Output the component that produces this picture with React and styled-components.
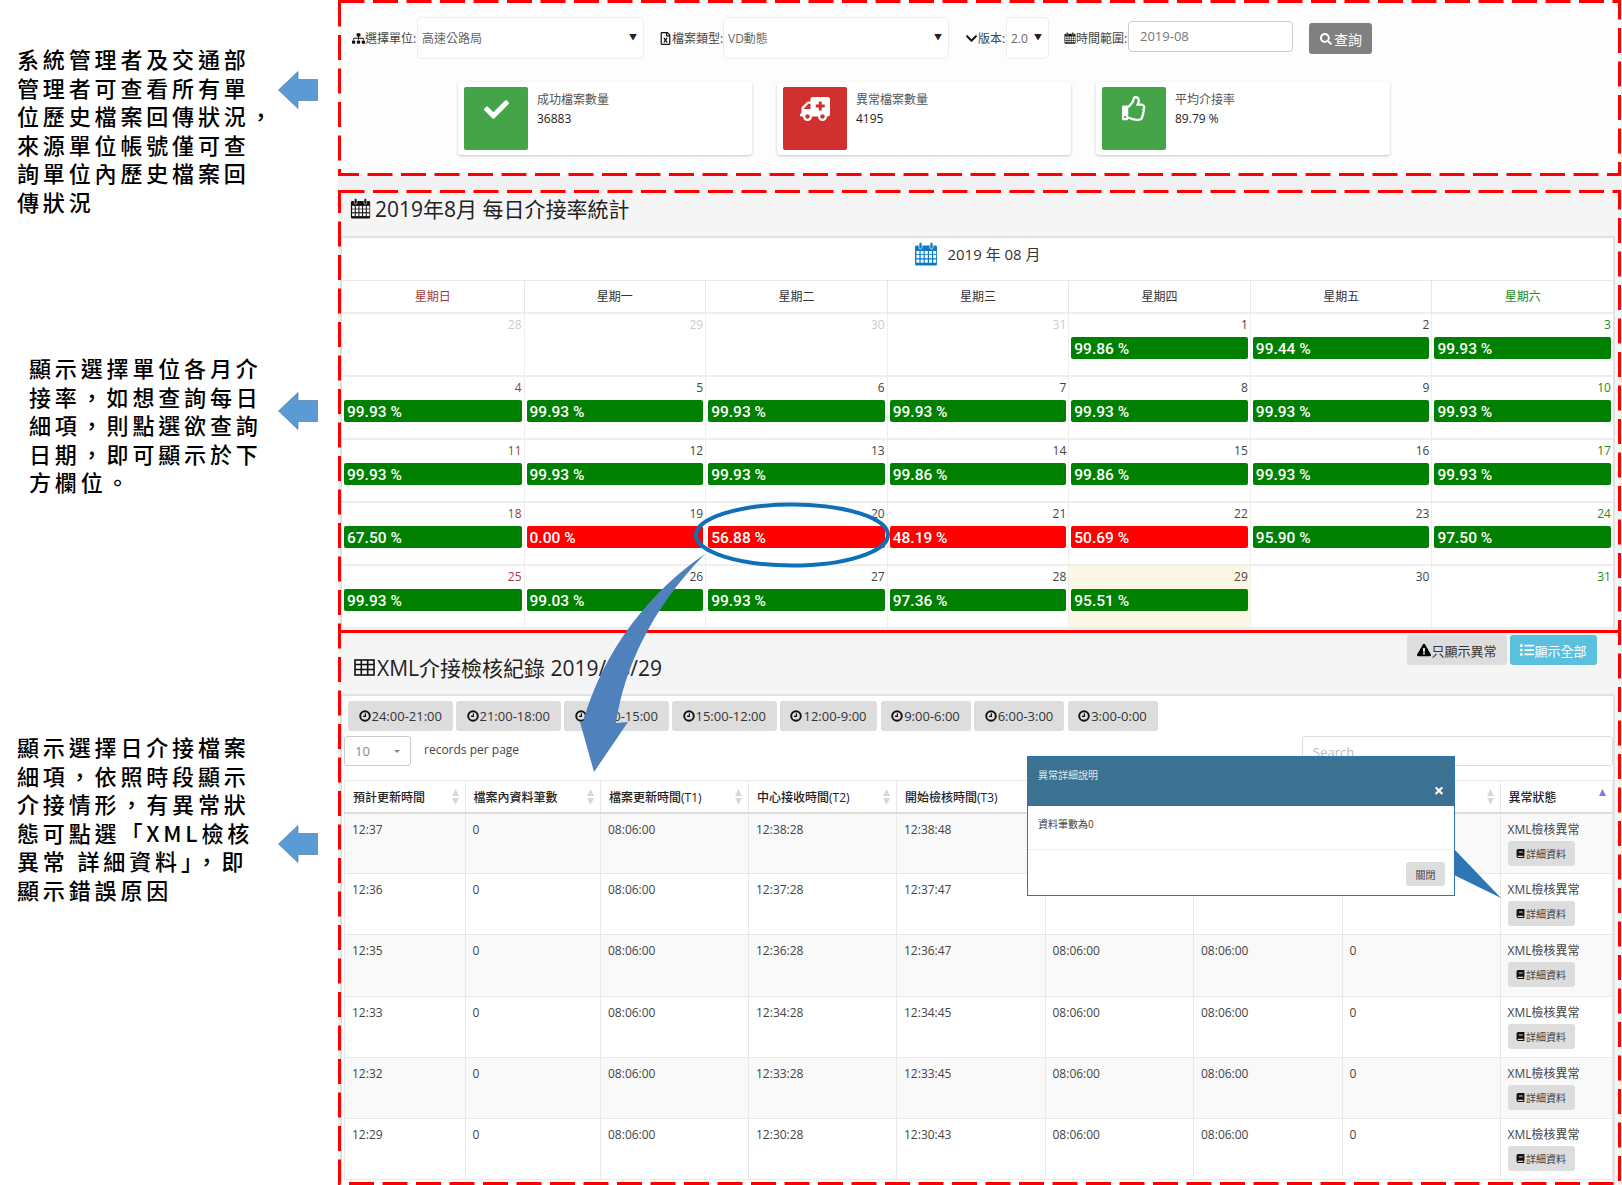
import React from "react";
import styled, { createGlobalStyle } from "styled-components";
import {
  FaAmbulance,
  FaBook,
  FaCheck,
  FaChevronDown,
  FaExclamationTriangle,
  FaList,
  FaRegFileExcel,
  FaRegThumbsUp,
  FaSearch,
  FaSitemap,
} from "react-icons/fa";

const FONT = `"Open Sans", "Noto Sans CJK TC", sans-serif`;

const GlobalStyle = createGlobalStyle`
  html, body {
    margin: 0;
    height: 1185px;
    overflow: hidden;
    background: #fff;
    font-family: ${FONT};
    color: #333;
  }
  * { box-sizing: border-box; }
`;

const Page = styled.div`
  position: relative;
  display: flex;
  width: 1622px;
  height: 1185px;
  overflow: hidden;
`;

const NotesColumn = styled.aside`
  width: 338px;
  flex: none;
`;

const Note = styled.div`
  display: flex;
  align-items: flex-start;
  height: ${(p) => p.$height}px;
  padding-top: ${(p) => p.$top}px;
  padding-left: ${(p) => p.$left}px;
`;

const NoteText = styled.p`
  margin: 0;
  width: ${(p) => 278 - p.$left}px;
  font-family: "Noto Sans CJK TC", sans-serif;
  font-size: 22px;
  font-weight: 500;
  line-height: 28.6px;
  letter-spacing: 3.85px;
  color: #000;
  white-space: pre-line;
`;

const ArrowIcon = styled.svg`
  width: 40px;
  height: 38px;
  flex: none;
  margin-top: ${(p) => p.$offset}px;
`;

const Workspace = styled.main`
  position: relative;
  width: 1284px;
  flex: none;
  background: #f1f1f3;
`;

const DashFrame = styled.svg`
  position: absolute;
  inset: 0;
  width: 100%;
  height: 100%;
  pointer-events: none;
  z-index: 3;
  fill: none;

  rect {
    x: 1.5px;
    y: 1.5px;
    width: calc(100% - 3px);
    height: calc(100% - 3px);
    stroke: #ff0000;
    stroke-width: 3;
    stroke-dasharray: 25 8.5;
  }
`;

const TopSection = styled.section`
  position: relative;
  height: 176px;
  margin: 0 1px 14px 0;
  padding-top: 17px;
  background: #fdfdfd;
`;

const Toolbar = styled.div`
  display: flex;
  align-items: center;
  height: 42px;
  padding-left: 14px;
`;

const FilterLabel = styled.span`
  display: flex;
  align-items: center;
  width: ${(p) => p.$width}px;
  margin-left: ${(p) => p.$gap || 0}px;
  font-size: 12px;
  color: #444;
  white-space: nowrap;

  svg {
    flex: none;
    font-size: 13px;
    color: #111;
  }
`;

const Dropdown = styled.div`
  display: flex;
  align-items: center;
  justify-content: space-between;
  width: ${(p) => p.$width}px;
  height: 42px;
  padding: 0 6px 0 4px;
  background: #fff;
  border: 1px solid #eee;
  border-radius: 5px;
  font-size: 12px;
  color: #666;

  &::after {
    content: "▼";
    font-size: 8px;
    color: #222;
    margin-top: -3px;
  }
`;

const DateInput = styled.div`
  width: 165px;
  height: 31px;
  margin-left: 2px;
  margin-top: -3px;
  padding: 0 11px;
  background: #fff;
  border: 1px solid #ccc;
  border-radius: 4px;
  font-size: 13px;
  line-height: 29px;
  color: #777;
`;

const SearchButton = styled.button`
  display: flex;
  align-items: center;
  gap: 2px;
  width: 63px;
  height: 31px;
  margin: 1px 0 0 16px;
  padding: 0 0 0 11px;
  background: #808080;
  border: 0;
  border-radius: 3px;
  font: 14px ${FONT};
  color: #fff;

  svg { font-size: 12px; }
`;

const StatRow = styled.div`
  display: flex;
  gap: 25px;
  margin: 23px 0 0 120px;
`;

const StatCard = styled.div`
  display: flex;
  width: 294px;
  height: 73px;
  padding: 5px 6px;
  background: #fff;
  border-radius: 3px;
  box-shadow: 0 1px 3px rgba(0, 0, 0, 0.22);
`;

const StatIcon = styled.div`
  display: flex;
  justify-content: center;
  width: 64px;
  height: 63px;
  flex: none;
  padding-top: ${(p) => p.$top || 10}px;
  background: ${(p) => p.$color};
  border-radius: 2px;
  font-size: 25px;
  color: #fff;
`;

const AmbulanceMark = styled(FaAmbulance)`
  font-size: 30px;
  transform: scaleX(-1);
`;

const StatBody = styled.div`
  padding: 3px 0 0 9px;
  font-size: 12px;
  line-height: 19px;
`;

const StatLabel = styled.div`
  color: #555;
`;

const StatValue = styled.div`
  color: #222;
`;

const LowerSection = styled.section`
  position: relative;
  height: 995px;
  margin-right: 1px;
  padding: 0 2px;
  background: #f5f5f5;
`;

const PanelHeading = styled.h3`
  display: flex;
  align-items: center;
  gap: 4px;
  height: 46px;
  margin: 0;
  padding: 0 0 10px 10px;
  font-size: 21px;
  font-weight: 400;
  color: #222;
  white-space: nowrap;
`;

const PanelBody = styled.div`
  width: 1275px;
  background: #fff;
  border: 2px solid #e2e2e2;
  border-bottom: 0;
`;

const MonthTitle = styled.div`
  display: flex;
  align-items: center;
  justify-content: center;
  gap: 9px;
  height: 42px;
  padding-bottom: 11px;
  font-size: 15px;
  color: #333;
`;

const CalendarSvg = styled.svg`
  flex: none;
  width: ${(p) => p.$width}px;
  height: ${(p) => p.$height}px;
  color: ${(p) => p.$color || "#111"};
`;

const WeekGrid = styled.div`
  display: grid;
  grid-template-columns: repeat(7, 1fr);
`;

const WeekDay = styled.div`
  height: 34px;
  border-top: 1px solid #e8e8e8;
  border-left: ${(p) => (p.$first ? "0" : "1px solid #e8e8e8")};
  border-bottom: 2px solid #eee;
  text-align: center;
  font-size: 12px;
  line-height: 31px;
  color: ${(p) => p.$color || "#333"};
`;

const DayCell = styled.div`
  height: 63px;
  padding: 2px 2px 0;
  background: ${(p) => (p.$today ? "#fcf8e3" : "transparent")};
  border-left: ${(p) => (p.$first ? "0" : "1px solid #eee")};
  border-bottom: 2px solid #eee;
`;

const DayNumber = styled.div`
  height: 17px;
  margin-bottom: 4px;
  text-align: right;
  font-size: 12px;
  line-height: 17px;
  color: ${(p) => p.$color};
`;

const RateBar = styled.div`
  height: 22px;
  padding-left: 3px;
  background: ${(p) => (p.$bad ? "#ff0000" : "#008000")};
  border-radius: 2px;
  font-family: Roboto, sans-serif;
  font-size: 15.5px;
  font-weight: 500;
  line-height: 24px;
  color: #fff;
  white-space: nowrap;
`;

const RecordsPanel = styled.div`
  position: absolute;
  top: 440px;
  left: 2px;
  right: 0;
  height: 555px;
  border-top: 3px solid #ff0000;
  z-index: 1;
`;

const RecordsHeader = styled.div`
  display: flex;
  justify-content: space-between;
  height: 61px;
  padding-right: 24px;
`;

const RecordsTitle = styled(PanelHeading)`
  gap: 2px;
  height: auto;
  padding: 21px 0 0 14px;
  align-items: flex-start;
  line-height: 28px;
`;

const GridSvg = styled.svg`
  flex: none;
  width: 21px;
  height: 17px;
  margin-top: 5px;
  fill: none;
  stroke: #111;
  stroke-width: 1.6;
`;

const HeaderActions = styled.div`
  display: flex;
  gap: 3px;
  padding-top: 2px;
`;

const HeaderButton = styled.button`
  display: flex;
  align-items: center;
  justify-content: center;
  width: ${(p) => p.$width}px;
  height: 30px;
  padding: 0;
  background: ${(p) => (p.$active ? "#5bc0de" : "#ddd")};
  border: 0;
  border-radius: 3px;
  font: 13px ${FONT};
  color: ${(p) => (p.$active ? "#fff" : "#333")};

  svg {
    font-size: 14px;
    color: ${(p) => (p.$active ? "#fff" : "#000")};
  }
`;

const RecordsBody = styled(PanelBody)`
  height: 492px;
  padding: 5px 0 0 2px;
  overflow: hidden;
`;

const TimeTabs = styled.div`
  display: flex;
  gap: 3.5px;
  padding-left: 4px;
`;

const TimeTab = styled.button`
  display: flex;
  align-items: center;
  justify-content: center;
  gap: 1px;
  width: ${(p) => p.$width}px;
  height: 30px;
  padding: 0;
  background: #ddd;
  border: 0;
  border-radius: 3px;
  font: 13px ${FONT};
  color: #333;
`;

const ClockSvg = styled.svg`
  flex: none;
  width: 12px;
  height: 12px;
  fill: none;
  stroke: #111;
`;

const TableControls = styled.div`
  display: flex;
  align-items: center;
  justify-content: space-between;
  height: 30px;
  margin: 5px 0 14px;
`;

const LengthPicker = styled.div`
  display: flex;
  align-items: center;
  gap: 13px;
  font-size: 12px;
  color: #444;
`;

const RecordsLabel = styled.span`
  margin-top: -4px;
`;

const LengthSelect = styled.div`
  display: flex;
  align-items: center;
  justify-content: space-between;
  width: 67px;
  height: 30px;
  padding: 0 10px;
  border: 1px solid #ccc;
  border-radius: 3px;
  font-size: 13px;
  color: #888;

  &::after {
    content: "";
    border: 3px solid transparent;
    border-top-color: #888;
    margin-top: 3px;
  }
`;

const SearchBox = styled.input`
  width: 311px;
  height: 30px;
  padding: 1px 10px 0;
  border: 1px solid #ddd;
  border-radius: 3px;
  font: 13px ${FONT};

  &::placeholder { color: #bbb; }
`;

const RecordsTable = styled.table`
  width: 1268px;
  table-layout: fixed;
  border-collapse: collapse;
  font-size: 12px;
`;

const HeadCell = styled.th`
  position: relative;
  height: 32px;
  padding: 1px 8px 0;
  text-align: left;
  font-size: 12px;
  font-weight: 500;
  color: #222;
  background: #fff;
  border: 1px solid #e8e8e8;
  border-bottom: 2px solid #ddd;
  white-space: nowrap;
  overflow: hidden;
`;

const SortMark = styled.svg`
  position: absolute;
  top: 8px;
  right: 6px;
  width: 7px;
  height: 16px;
  fill: ${(p) => (p.$active ? "#7a7adf" : "#d8d8d8")};
`;

const BodyCell = styled.td`
  height: 61.2px;
  padding: 7px 7px 0;
  vertical-align: top;
  line-height: 17px;
  color: #444;
  background: ${(p) => (p.$odd ? "#f9f9f9" : "#fff")};
  border: 1px solid #e8e8e8;
  border-top: 0;
`;

const DetailButton = styled.button`
  display: flex;
  align-items: center;
  justify-content: center;
  width: 67px;
  height: 25px;
  margin-top: 3px;
  padding: 0;
  background: #ddd;
  border: 0;
  border-radius: 3px;
  font: 10px ${FONT};
  color: #444;

  svg {
    font-size: 9px;
    color: #111;
    margin-right: 1px;
  }
`;

const Annotations = styled.svg`
  position: absolute;
  inset: 0;
  width: 1622px;
  height: 1185px;
  pointer-events: none;
  z-index: 5;
`;

const Modal = styled.div`
  position: absolute;
  left: 1027px;
  top: 756px;
  width: 428px;
  height: 140px;
  background: #fff;
  border: 1px solid #2e75b6;
  z-index: 6;
`;

const ModalHeader = styled.div`
  position: relative;
  height: 49px;
  padding: 10px 10px 0;
  background: #3b7291;
  font-size: 10px;
  line-height: 16px;
  color: #e6e6e6;
`;

const ModalClose = styled.span`
  position: absolute;
  right: 10px;
  bottom: 8px;
  font-size: 18px;
  font-weight: 700;
  line-height: 16px;
  color: #fff;
`;

const ModalContent = styled.div`
  height: 44px;
  padding: 10px 10px 0;
  border-bottom: 1px solid #eee;
  font-size: 10px;
  line-height: 16px;
  color: #444;
`;

const ModalFooter = styled.div`
  display: flex;
  justify-content: flex-end;
  padding: 12px 9px 0;
`;

const ModalButton = styled.button`
  width: 39px;
  height: 24px;
  padding: 0;
  background: #ddd;
  border: 0;
  border-radius: 3px;
  font: 10px ${FONT};
  color: #444;
`;

const notes = [
  {
    height: 190,
    top: 44,
    left: 17,
    arrow: 27,
    text: "系統管理者及交通部\n管理者可查看所有單\n位歷史檔案回傳狀況，\n來源單位帳號僅可查\n詢單位內歷史檔案回\n傳狀況",
  },
  {
    height: 374,
    top: 163,
    left: 29,
    arrow: 39,
    text: "顯示選擇單位各月介\n接率，如想查詢每日\n細項，則點選欲查詢\n日期，即可顯示於下\n方欄位。",
  },
  {
    height: 621,
    top: 168,
    left: 17,
    arrow: 93,
    text: "顯示選擇日介接檔案\n細項，依照時段顯示\n介接情形，有異常狀\n態可點選「XML檢核\n異常 詳細資料」，即\n顯示錯誤原因",
  },
];

const SUNDAY = "#a33a3a";
const SATURDAY = "#228b22";

const weekDays = [
  { label: "星期日", color: SUNDAY },
  { label: "星期一" },
  { label: "星期二" },
  { label: "星期三" },
  { label: "星期四" },
  { label: "星期五" },
  { label: "星期六", color: SATURDAY },
];

const days = [
  { day: 28, muted: true },
  { day: 29, muted: true },
  { day: 30, muted: true },
  { day: 31, muted: true },
  { day: 1, rate: "99.86" },
  { day: 2, rate: "99.44" },
  { day: 3, rate: "99.93" },
  { day: 4, rate: "99.93" },
  { day: 5, rate: "99.93" },
  { day: 6, rate: "99.93" },
  { day: 7, rate: "99.93" },
  { day: 8, rate: "99.93" },
  { day: 9, rate: "99.93" },
  { day: 10, rate: "99.93" },
  { day: 11, rate: "99.93" },
  { day: 12, rate: "99.93" },
  { day: 13, rate: "99.93" },
  { day: 14, rate: "99.86" },
  { day: 15, rate: "99.86" },
  { day: 16, rate: "99.93" },
  { day: 17, rate: "99.93" },
  { day: 18, rate: "67.50" },
  { day: 19, rate: "0.00", bad: true },
  { day: 20, rate: "56.88", bad: true },
  { day: 21, rate: "48.19", bad: true },
  { day: 22, rate: "50.69", bad: true },
  { day: 23, rate: "95.90" },
  { day: 24, rate: "97.50" },
  { day: 25, rate: "99.93" },
  { day: 26, rate: "99.03" },
  { day: 27, rate: "99.93" },
  { day: 28, rate: "97.36" },
  { day: 29, rate: "95.51", today: true },
  { day: 30 },
  { day: 31 },
];

const timeTabs = [
  ["24:00-21:00", 104.5],
  ["21:00-18:00", 104.5],
  ["18:00-15:00", 104.5],
  ["15:00-12:00", 104.5],
  ["12:00-9:00", 97],
  ["9:00-6:00", 90],
  ["6:00-3:00", 90],
  ["3:00-0:00", 90],
];

const columns = [
  { title: "預計更新時間", width: 120.5 },
  { title: "檔案內資料筆數", width: 135.5 },
  { title: "檔案更新時間(T1)", width: 148 },
  { title: "中心接收時間(T2)", width: 148 },
  { title: "開始檢核時間(T3)", width: 148.5 },
  { title: "完成檢核時間(T4)", width: 148.5 },
  { title: "寫入時間(T5)", width: 148.5 },
  { title: "異常筆數", width: 158 },
  { title: "異常狀態", width: 112.5, active: true },
];

const rows = [
  ["12:37", "12:38:28", "12:38:48"],
  ["12:36", "12:37:28", "12:37:47"],
  ["12:35", "12:36:28", "12:36:47"],
  ["12:33", "12:34:28", "12:34:45"],
  ["12:32", "12:33:28", "12:33:45"],
  ["12:29", "12:30:28", "12:30:43"],
];

const dayColor = (item, column) => {
  if (item.muted) return "#ccc";
  if (column === 0) return SUNDAY;
  if (column === 6) return SATURDAY;
  return "#444";
};

const SideArrow = ({ offset }) => (
  <ArrowIcon $offset={offset} viewBox="0 0 40 38">
    <path d="M0.5 19 L20 0.5 V8.5 H39.5 V29.5 H20 V37.5 Z" fill="#5b9bd5" stroke="#41719c" strokeWidth="0.6" />
  </ArrowIcon>
);

const SortIcon = ({ active }) => (
  <SortMark $active={active} viewBox="0 0 7 16">
    <path d="M3.5 0 L7 7 H0 Z" />
    {!active && <path d="M3.5 16 L7 9 H0 Z" />}
  </SortMark>
);

const CalendarIcon = ({ width, height, color }) => (
  <CalendarSvg $width={width} $height={height} $color={color} viewBox="0 0 24 24">
    <path
      fill="currentColor"
      d="M2.5 3.5 H21.5 A1.5 1.5 0 0 1 23 5 V22 A1.5 1.5 0 0 1 21.5 23.5 H2.5 A1.5 1.5 0 0 1 1 22 V5 A1.5 1.5 0 0 1 2.5 3.5 Z"
    />
    {[5, 16].map((x) => (
      <rect key={x} x={x} y="0.5" width="3" height="6.5" rx="1.4" fill="currentColor" stroke="#fff" strokeWidth="0.7" />
    ))}
    {[9, 13, 17.5].map((y) =>
      [2.4, 6.6, 10.8, 15, 19.2].map((x) => (
        <rect key={`${x}-${y}`} x={x} y={y} width="3" height="3.2" fill="#fff" />
      ))
    )}
  </CalendarSvg>
);

const ClockIcon = () => (
  <ClockSvg viewBox="0 0 12 12">
    <circle cx="6" cy="6" r="4.8" strokeWidth="1.9" />
    <path d="M6.4 3.2 V6.4 H4" strokeWidth="1.2" />
  </ClockSvg>
);

const GridIcon = () => (
  <GridSvg viewBox="0 0 21 17">
    <rect x="1" y="1" width="19" height="15" />
    <path d="M1 5.5 H20 M1 10.5 H20 M7.3 1 V16 M13.7 1 V16" />
  </GridSvg>
);

const App = () => {
  return (
    <Page>
      <GlobalStyle />
      <NotesColumn>
        {notes.map((note) => (
          <Note key={note.left + note.text} $height={note.height} $top={note.top} $left={note.left}>
            <NoteText $left={note.left}>{note.text}</NoteText>
            <SideArrow offset={note.arrow} />
          </Note>
        ))}
      </NotesColumn>

      <Workspace>
        <TopSection>
          <Toolbar>
            <FilterLabel $width={65}>
              <FaSitemap />
              選擇單位:
            </FilterLabel>
            <Dropdown $width={227}>高速公路局</Dropdown>
            <FilterLabel $width={64} $gap={15}>
              <FaRegFileExcel />
              檔案類型:
            </FilterLabel>
            <Dropdown $width={226}>VD動態</Dropdown>
            <FilterLabel $width={41} $gap={16}>
              <FaChevronDown />
              版本:
            </FilterLabel>
            <Dropdown $width={43}>2.0</Dropdown>
            <FilterLabel $width={62} $gap={15}>
              <CalendarIcon width={12} height={14} />
              時間範圍:
            </FilterLabel>
            <DateInput>2019-08</DateInput>
            <SearchButton>
              <FaSearch />
              查詢
            </SearchButton>
          </Toolbar>
          <StatRow>
            <StatCard>
              <StatIcon $color="#46a448">
                <FaCheck />
              </StatIcon>
              <StatBody>
                <StatLabel>成功檔案數量</StatLabel>
                <StatValue>36883</StatValue>
              </StatBody>
            </StatCard>
            <StatCard>
              <StatIcon $color="#d0302e" $top={7}>
                <AmbulanceMark />
              </StatIcon>
              <StatBody>
                <StatLabel>異常檔案數量</StatLabel>
                <StatValue>4195</StatValue>
              </StatBody>
            </StatCard>
            <StatCard>
              <StatIcon $color="#46a448" $top={9}>
                <FaRegThumbsUp />
              </StatIcon>
              <StatBody>
                <StatLabel>平均介接率</StatLabel>
                <StatValue>89.79 %</StatValue>
              </StatBody>
            </StatCard>
          </StatRow>
          <DashFrame>
            <rect />
          </DashFrame>
        </TopSection>

        <LowerSection>
          <PanelHeading>
            <CalendarIcon width={21} height={23} />
            2019年8月 每日介接率統計
          </PanelHeading>
          <PanelBody>
            <MonthTitle>
              <CalendarIcon width={24} height={26} color="#0d7bc4" />
              2019 年 08 月
            </MonthTitle>
            <WeekGrid>
              {weekDays.map((item, index) => (
                <WeekDay key={item.label} $first={index === 0} $color={item.color}>
                  {item.label}
                </WeekDay>
              ))}
              {days.map((item, index) => (
                <DayCell key={index} $first={index % 7 === 0} $today={item.today}>
                  <DayNumber $color={dayColor(item, index % 7)}>{item.day}</DayNumber>
                  {item.rate && <RateBar $bad={item.bad}>{item.rate} %</RateBar>}
                </DayCell>
              ))}
            </WeekGrid>
          </PanelBody>

          <RecordsPanel>
            <RecordsHeader>
              <RecordsTitle>
                <GridIcon />
                XML介接檢核紀錄 2019/08/29
              </RecordsTitle>
              <HeaderActions>
                <HeaderButton $width={100}>
                  <FaExclamationTriangle />
                  只顯示異常
                </HeaderButton>
                <HeaderButton $width={87} $active>
                  <FaList />
                  顯示全部
                </HeaderButton>
              </HeaderActions>
            </RecordsHeader>
            <RecordsBody>
              <TimeTabs>
                {timeTabs.map(([label, width]) => (
                  <TimeTab key={label} $width={width}>
                    <ClockIcon />
                    {label}
                  </TimeTab>
                ))}
              </TimeTabs>
              <TableControls>
                <LengthPicker>
                  <LengthSelect>10</LengthSelect>
                  <RecordsLabel>records per page</RecordsLabel>
                </LengthPicker>
                <SearchBox placeholder="Search" readOnly />
              </TableControls>
              <RecordsTable>
                <colgroup>
                  {columns.map((column) => (
                    <col key={column.title} width={column.width} />
                  ))}
                </colgroup>
                <thead>
                  <tr>
                    {columns.map((column) => (
                      <HeadCell key={column.title}>
                        {column.title}
                        <SortIcon active={column.active} />
                      </HeadCell>
                    ))}
                  </tr>
                </thead>
                <tbody>
                  {rows.map(([planned, received, started], index) => (
                    <tr key={planned}>
                      <BodyCell $odd={index % 2 === 0}>{planned}</BodyCell>
                      <BodyCell $odd={index % 2 === 0}>0</BodyCell>
                      <BodyCell $odd={index % 2 === 0}>08:06:00</BodyCell>
                      <BodyCell $odd={index % 2 === 0}>{received}</BodyCell>
                      <BodyCell $odd={index % 2 === 0}>{started}</BodyCell>
                      <BodyCell $odd={index % 2 === 0}>08:06:00</BodyCell>
                      <BodyCell $odd={index % 2 === 0}>08:06:00</BodyCell>
                      <BodyCell $odd={index % 2 === 0}>0</BodyCell>
                      <BodyCell $odd={index % 2 === 0}>
                        XML檢核異常
                        <DetailButton>
                          <FaBook />
                          詳細資料
                        </DetailButton>
                      </BodyCell>
                    </tr>
                  ))}
                </tbody>
              </RecordsTable>
            </RecordsBody>
          </RecordsPanel>
          <DashFrame>
            <rect />
          </DashFrame>
        </LowerSection>
      </Workspace>

      <Annotations viewBox="0 0 1622 1185">
        <ellipse cx="792" cy="535" rx="96" ry="30.5" fill="none" stroke="#0f70b7" strokeWidth="4" />
        <path
          d="M705 554 C652 590 604 648 583 722 L580 722 L594 772 L628 722 L616 723 C624 670 650 610 705 554 Z"
          fill="#4f81bd"
        />
        <path d="M1454 849 L1501 898 L1454 875 Z" fill="#2e75b6" />
      </Annotations>

      <Modal>
        <ModalHeader>
          異常詳細說明
          <ModalClose>×</ModalClose>
        </ModalHeader>
        <ModalContent>資料筆數為0</ModalContent>
        <ModalFooter>
          <ModalButton>關閉</ModalButton>
        </ModalFooter>
      </Modal>
    </Page>
  );
};

export default App;
